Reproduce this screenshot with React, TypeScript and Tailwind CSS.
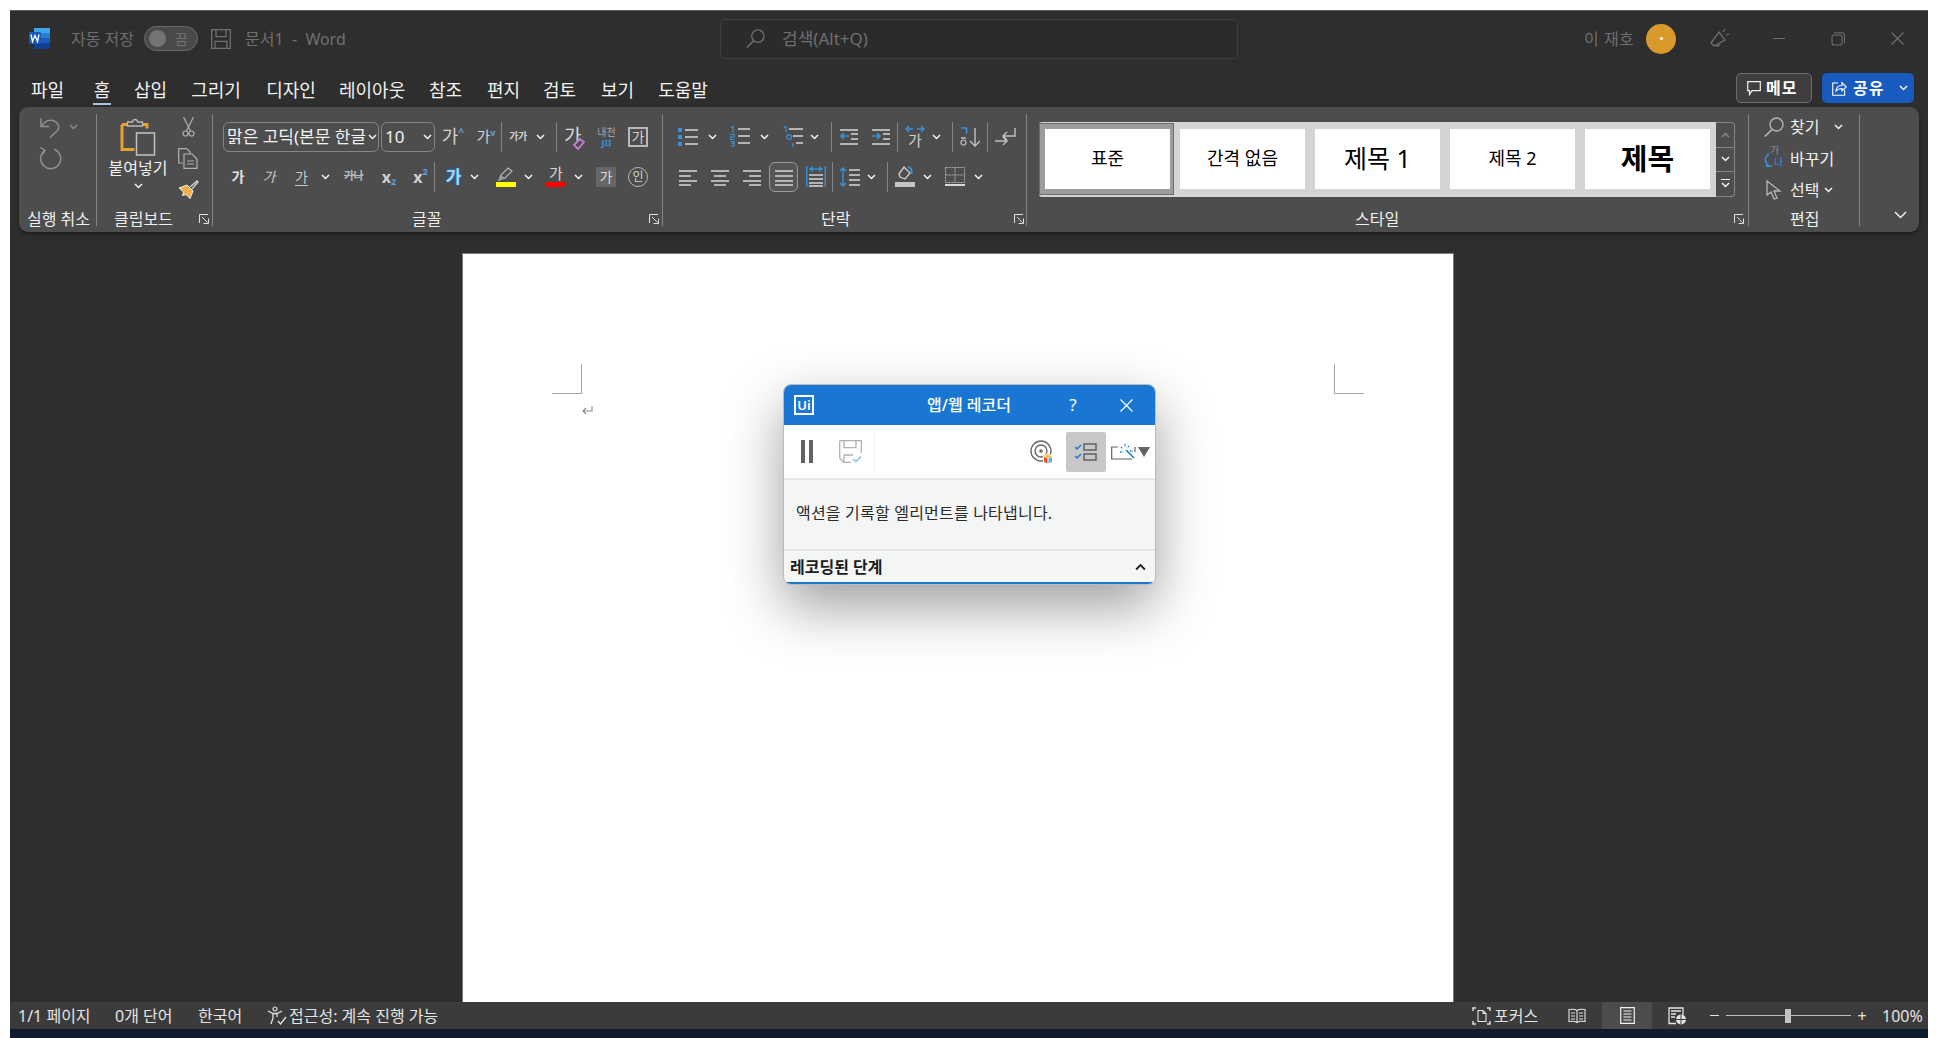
import React from 'react';

const GRAY = '#b4b4b4';
const BLUE = '#3a8fd6';

// 작은 펼침 화살표
const Chev = ({ className = '', color = '#f2f2f2' }: { className?: string; color?: string }) => (
  <svg width="9" height="6" viewBox="0 0 9 6" className={`shrink-0 ${className}`}>
    <path d="M1 1l3.5 3.5L8 1" fill="none" stroke={color} strokeWidth="1.5" />
  </svg>
);

const Sep = ({ className = '' }: { className?: string }) => (
  <div className={`h-[30px] w-px shrink-0 bg-[#858585] ${className}`} />
);

const Launcher = ({ className = '' }: { className?: string }) => (
  <svg width="10" height="10" viewBox="0 0 10 10" className={`shrink-0 ${className}`}>
    <path d="M.5 9V.5H9M3 3l5.5 5.5M9.5 4.5v5h-5" fill="none" stroke="#e0e0e0" strokeWidth="1" />
  </svg>
);

// 글자 아이콘 (가, 내천 등)
const Glyph = ({ children, className = '' }: { children: React.ReactNode; className?: string }) => (
  <span className={`flex shrink-0 items-center justify-center whitespace-nowrap ${className}`}>{children}</span>
);

const Lines = ({ rows, x1 = 0 }: { rows: [number, number, number][]; x1?: number }) => (
  <>
    {rows.map(([x, y, w], i) => (
      <rect key={i} x={x + x1} y={y} width={w} height="2" fill={GRAY} />
    ))}
  </>
);

const Icon = ({ w, h, children, className = '' }: { w: number; h: number; children: React.ReactNode; className?: string }) => (
  <svg width={w} height={h} viewBox={`0 0 ${w} ${h}`} className={`shrink-0 ${className}`}>
    {children}
  </svg>
);

const Bullets = ({ className }: { className?: string }) => (
  <Icon w={20} h={19} className={className}>
    <rect x="0" y="1" width="4" height="4" fill={BLUE} />
    <rect x="0" y="8" width="4" height="4" fill={BLUE} />
    <rect x="0" y="15" width="4" height="4" fill={BLUE} />
    <Lines rows={[[7, 2, 13], [7, 9, 13], [7, 16, 13]]} />
  </Icon>
);

const Numbered = ({ className }: { className?: string }) => (
  <Icon w={20} h={21} className={className}>
    <path d="M1 1.5l2-1v6M0 8.5h4v2.5H0.5v2.5H4.5M0.5 15.5H4v2H1.5M4 17.500v2.500H0.500" fill="none" stroke={BLUE} strokeWidth="1.200" />
    <Lines rows={[[8, 2, 12], [8, 9, 12], [8, 16, 12]]} />
  </Icon>
);

const MultiLevel = ({ className }: { className?: string }) => (
  <Icon w={20} h={21} className={className}>
    <path d="M1 1.500l2-1v6" fill="none" stroke={BLUE} strokeWidth="1.200" />
    <circle cx="6" cy="11" r="2.300" fill="none" stroke={BLUE} strokeWidth="1.300" />
    <path d="M10 17v4" stroke={BLUE} strokeWidth="1.300" />
    <Lines rows={[[6, 2, 14], [10, 9, 10], [13, 16, 7]]} />
  </Icon>
);

const Indent = ({ flip, className }: { flip?: boolean; className?: string }) => (
  <Icon w={18} h={18} className={className}>
    <Lines rows={[[0, 1, 18], [0, 15, 18]]} />
    {flip ? (
      <>
        <path d="M0 8h8M5 5l3 3-3 3" fill="none" stroke={BLUE} strokeWidth="1.600" />
        <Lines rows={[[11, 5, 7], [11, 10, 7]]} />
      </>
    ) : (
      <>
        <path d="M9 8H1M4 5L1 8l3 3" fill="none" stroke={BLUE} strokeWidth="1.600" />
        <Lines rows={[[11, 5, 7], [11, 10, 7]]} />
      </>
    )}
  </Icon>
);

const Align = ({ rows, className }: { rows: [number, number, number][]; className?: string }) => (
  <Icon w={18} h={18} className={className}>
    <Lines rows={rows} />
  </Icon>
);

const Search = ({ color, size = 20, className }: { color: string; size?: number; className?: string }) => (
  <svg width={size} height={size} viewBox="0 0 20 20" className={`shrink-0 ${className ?? ''}`}>
    <circle cx="12.500" cy="7.500" r="6.500" fill="none" stroke={color} strokeWidth="1.400" />
    <path d="M8 12.500L.8 19.500" stroke={color} strokeWidth="1.600" />
  </svg>
);

const StyleCell = ({ children, className = '' }: { children: React.ReactNode; className?: string }) => (
  <div className={`flex h-[60px] w-[125px] shrink-0 items-center justify-center whitespace-nowrap bg-white text-black ${className}`}>{children}</div>
);

const Group = ({ children, className = '' }: { children: React.ReactNode; className?: string }) => (
  <div className={`flex h-[112px] shrink-0 flex-col border-r border-[#858585] ${className}`}>{children}</div>
);

const GroupLabel = ({ children, className = '' }: { children: React.ReactNode; className?: string }) => (
  <div className={`mt-auto -mb-[2px] flex h-[17px] items-center text-[16px] leading-[17px] text-[#f0f0f0] ${className}`}>{children}</div>
);

const tabs: [string, string][] = [
  ['파일', 'ml-[21px] w-[33px]'],
  ['홈', 'ml-[29px] w-[18px]'],
  ['삽입', 'ml-[23px] w-[33px]'],
  ['그리기', 'ml-[24px] w-[50px]'],
  ['디자인', 'ml-[25px] w-[50px]'],
  ['레이아웃', 'ml-[23px] w-[66px]'],
  ['참조', 'ml-[24px] w-[33px]'],
  ['편지', 'ml-[25px] w-[33px]'],
  ['검토', 'ml-[23px] w-[33px]'],
  ['보기', 'ml-[25px] w-[33px]'],
  ['도움말', 'ml-[24px] w-[50px]'],
];

export default function App() {
  return (
    <div className="h-[1038px] w-[1938px] overflow-hidden bg-white pl-[10px] pt-[10px] font-['Noto_Sans','Noto_Sans_CJK_KR',sans-serif]">
      <div className="flex h-[1019px] w-[1918px] flex-col border-t border-[#5c5c5c] bg-[#2e2e2e]">
        {/* 제목 표시줄 */}
        <div className="flex h-[55px] shrink-0 items-center text-[16px] text-[#6f6f6f]">
          <svg width="21" height="21" viewBox="0 0 21 21" className="ml-[19px] shrink-0">
            <rect x="5" y="0" width="16" height="5" fill="#41a5ee" />
            <rect x="5" y="5" width="16" height="5" fill="#2b7cd3" />
            <rect x="5" y="10" width="16" height="5" fill="#185abd" />
            <rect x="5" y="15" width="16" height="6" fill="#103f91" />
            <rect x="0" y="4" width="12" height="12" rx="1" fill="#185abd" />
            <path d="M2 6.500l1.500 7 2.500-6 2.500 6 1.500-7" fill="none" stroke="#fff" strokeWidth="1.300" />
          </svg>
          <span className="ml-[21px] w-[65px] whitespace-nowrap">자동 저장</span>
          <div className="ml-[8px] flex h-[25px] w-[54px] items-center rounded-full border border-[#6a6a6a] bg-[#4a4a4a]">
            <div className="ml-[4px] h-[17px] w-[17px] rounded-full bg-[#747474]" />
            <span className="ml-[9px] text-[14px] text-[#737373]">끔</span>
          </div>
          <svg width="20" height="20" viewBox="0 0 20 20" className="ml-[13px] shrink-0">
            <path d="M.7.7h18.600v18.600H.7zM5 .7v7h10v-7M4 19.300v-7h12v7" fill="none" stroke="#6f6f6f" strokeWidth="1.300" />
          </svg>
          <span className="ml-[14px] w-[110px] whitespace-pre">문서1  -  Word</span>
          <div className="ml-[365px] flex h-[40px] w-[518px] shrink-0 items-center rounded-[5px] border border-[#3f3f3f] bg-[#2b2b2b]">
            <Search color="#6f6f6f" size={19} className="ml-[25px]" />
            <span className="ml-[17px] text-[17px]">검색(Alt+Q)</span>
          </div>
          <span className="ml-[346px] w-[50px] whitespace-nowrap tracking-[0.5px]">이 재호</span>
          <div className="ml-[12px] flex h-[30px] w-[30px] items-center justify-center rounded-full bg-[#d99a2b]">
            <span className="h-[3px] w-[3px] rounded-full bg-white" />
          </div>
          <svg width="20" height="21" viewBox="0 0 20 21" className="ml-[34px] shrink-0">
            <path d="M1 15L9 4l6 8-11 6zM6 17.500a2.500 2.500 0 0 0 4-1.500M13 4l2-3M16 7l3-1" fill="none" stroke="#6f6f6f" strokeWidth="1.300" />
          </svg>
          <div className="ml-[43px] h-px w-[12px] bg-[#6f6f6f]" />
          <svg width="14" height="14" viewBox="0 0 14 14" className="ml-[46px] shrink-0">
            <path d="M3 .7h8a2.500 2.500 0 0 1 2.500 2.500v8M1 5a2 2 0 0 1 2-2h6a2 2 0 0 1 2 2v6a2 2 0 0 1-2 2H3a2 2 0 0 1-2-2z" fill="none" stroke="#6f6f6f" strokeWidth="1.100" />
          </svg>
          <svg width="13" height="13" viewBox="0 0 13 13" className="ml-[46px] shrink-0">
            <path d="M.5.5l12 12M12.500.5l-12 12" stroke="#6f6f6f" strokeWidth="1.200" />
          </svg>
        </div>

        {/* 메뉴 탭 */}
        <div className="flex h-[41px] shrink-0 items-start text-[18px] leading-[24px] text-[#f2f2f2]">
          {tabs.map(([label, cls]) => (
            <div key={label} className={`relative mt-[12px] shrink-0 whitespace-nowrap text-center ${cls}`}>
              {label}
              {label === '홈' && <div className="absolute left-0 top-[25px] h-[2px] w-[18px] bg-[#a8c4e8]" />}
            </div>
          ))}
          <div className="ml-[1028px] mt-[7px] flex h-[30px] w-[76px] items-center rounded-[5px] border border-[#6e6e6e] bg-[#3f3f3f]">
            <svg width="14" height="15" viewBox="0 0 14 15" className="ml-[10px] shrink-0">
              <path d="M.7.700h12.600v9H5L2.500 13.500V9.700H.7z" fill="none" stroke="#f0f0f0" strokeWidth="1.200" />
            </svg>
            <span className="ml-[5px] text-[16px] font-bold tracking-[1px] text-white">메모</span>
          </div>
          <div className="ml-[10px] mt-[7px] flex h-[30px] w-[92px] items-center rounded-[5px] bg-[#185abd]">
            <svg width="15" height="15" viewBox="0 0 15 15" className="ml-[10px] shrink-0">
              <path d="M6 2H.7v12.300h12V9M4 10c0-4 3-5.500 6-5.500V1.500L14.300 6 10 10V7.500C7.500 7.500 5.500 8 4 10z" fill="none" stroke="#fff" strokeWidth="1.100" />
            </svg>
            <span className="ml-[6px] w-[36px] whitespace-nowrap text-[16px] font-bold tracking-[1px] text-white">공유</span>
            <Chev className="ml-[10px]" />
          </div>
        </div>

        {/* 리본 */}
        <div className="ml-[9px] flex h-[125px] w-[1900px] shrink-0 items-center rounded-[9px] bg-[#4d4d4d] text-[#e8e8e8] shadow-[0_2px_4px_rgba(0,0,0,0.4)]">
          {/* 실행 취소 */}
          <Group className="w-[78px]">
            <div className="ml-[21px] mt-[3px] flex items-center">
              <svg width="21" height="21" viewBox="0 0 21 21" className="shrink-0">
                <path d="M1 1.500v8h8M1.500 9C5 4 9 2.500 13 3.500c5 1.500 7 6 4.500 10L10 20.500" fill="none" stroke="#8f8f8f" strokeWidth="1.500" />
              </svg>
              <Chev className="ml-[8px]" color="#8a8a8a" />
            </div>
            <svg width="23" height="24" viewBox="0 0 23 24" className="ml-[20px] mt-[8px] shrink-0">
              <path d="M15 3.200a10 10 0 1 1-9 1.200M1.500 1.500L6 4.500 3 9" fill="none" stroke="#8f8f8f" strokeWidth="1.500" />
            </svg>
            <GroupLabel className="ml-[8px] whitespace-nowrap">실행 취소</GroupLabel>
          </Group>

          {/* 클립보드 */}
          <Group className="w-[116px]">
            <div className="flex">
              <div className="ml-[11px] flex w-[60px] flex-col items-center">
                <svg width="37" height="38" viewBox="0 0 36 38" className="mt-[4px] shrink-0">
                  <path d="M1.500 6.500h25v4M14 31.500H1.500v-25" fill="none" stroke="#e8a030" strokeWidth="3" />
                  <path d="M7 8V4h5a2.500 2.500 0 0 1 5 0h5v4z" fill="#4d4d4d" stroke="#b8b8b8" strokeWidth="1.300" />
                  <rect x="16" y="15" width="18" height="22" fill="#4d4d4d" stroke="#c4c4c4" strokeWidth="1.500" />
                </svg>
                <span className="mt-[2px] whitespace-nowrap text-[16px] leading-[20px] text-[#f2f2f2]">붙여넣기</span>
                <Chev className="mt-[5px]" />
              </div>
              <div className="ml-[10px] mt-[3px] flex w-[20px] flex-col items-center">
                <svg width="13" height="20" viewBox="0 0 13 20" className="shrink-0">
                  <path d="M1.500 0l7 14M11.500 0l-7 14" stroke="#b0b0b0" strokeWidth="1.200" />
                  <circle cx="3.500" cy="16.500" r="2.500" fill="none" stroke="#b0b0b0" strokeWidth="1.200" />
                  <circle cx="9.500" cy="16.500" r="2.500" fill="none" stroke="#b0b0b0" strokeWidth="1.200" />
                </svg>
                <svg width="20" height="21" viewBox="0 0 20 21" className="mt-[11px] shrink-0">
                  <path d="M5 15H.7V.7h8L12 4v2M6 6h8l5 5v9.300H6zM9 13h7M9 16h7" fill="none" stroke="#b0b0b0" strokeWidth="1.200" />
                </svg>
                <svg width="21" height="19" viewBox="0 0 21 19" className="mt-[11px] shrink-0">
                  <path d="M1 8l8-3 6 6-3 7.500-4-4-3.500 1 1-3.500z" fill="#f0b04a" stroke="#f2f2f2" strokeWidth="1" />
                  <path d="M12 7l7-6 1 1-6 7" fill="none" stroke="#d0d0d0" strokeWidth="1.400" />
                </svg>
              </div>
            </div>
            <GroupLabel>
              <span className="ml-[17px] w-[61px] whitespace-nowrap">클립보드</span>
              <Launcher className="ml-[24px]" />
            </GroupLabel>
          </Group>

          {/* 글꼴 */}
          <Group className="w-[450px]">
            <div className="mt-[8px] flex h-[30px] items-center">
              <div className="ml-[10px] flex h-[30px] w-[156px] shrink-0 items-center rounded-[6px] border border-[#858585] pl-[3px] text-[17px] text-[#f2f2f2]">
                <span className="w-[141px] overflow-hidden whitespace-nowrap">맑은 고딕(본문 한글</span>
                <Chev />
              </div>
              <div className="ml-[2px] flex h-[30px] w-[54px] shrink-0 items-center rounded-[6px] border border-[#858585] pl-[3px] text-[17px] text-[#f2f2f2]">
                <span className="w-[38px]">10</span>
                <Chev />
              </div>
              <Glyph className="ml-[6px] w-[24px] text-[18px] text-[#d0d0d0]">
                가<span className="-mt-[8px] text-[10px] font-bold text-[#5aa5e0]">^</span>
              </Glyph>
              <Glyph className="ml-[11px] w-[20px] text-[15px] text-[#d0d0d0]">
                가<span className="-mt-[7px] text-[9px] font-bold text-[#5aa5e0]">v</span>
              </Glyph>
              <Sep className="ml-[5px]" />
              <Glyph className="ml-[7px] w-[18px] text-[10px] font-bold tracking-[-0.5px] text-[#d0d0d0]">가가</Glyph>
              <Chev className="ml-[9px]" />
              <Sep className="ml-[11px]" />
              <div className="relative ml-[7px] h-[20px] w-[20px] shrink-0 text-[19px] leading-[18px] text-[#d8d8d8]">
                가
                <svg width="12" height="12" viewBox="0 0 12 12" className="absolute bottom-[-3px] right-[-1px]">
                  <path d="M1 7l6-6 4 3-6 7z" fill="#4d4d4d" stroke="#c77fd0" strokeWidth="1.800" />
                </svg>
              </div>
              <div className="ml-[12px] flex w-[21px] shrink-0 flex-col items-center">
                <span className="whitespace-nowrap text-[10px] leading-[11px] text-[#a8a8a8]">내천</span>
                <span className="text-[9px] font-bold leading-[9px] text-[#3a8fd6]">JII</span>
              </div>
              <Glyph className="ml-[11px] h-[20px] w-[20px] border-2 border-[#b8b8b8] text-[14px] text-[#d0d0d0]">가</Glyph>
            </div>
            <div className="mt-[10px] flex h-[30px] items-center">
              <Glyph className="ml-[19px] w-[12px] text-[14px] font-bold text-[#e0e0e0]">가</Glyph>
              <Glyph className="ml-[19px] w-[12px] text-[14px] italic text-[#c8c8c8]">가</Glyph>
              <Glyph className="ml-[20px] w-[13px] border-b border-[#c8c8c8] text-[14px] leading-[17px] text-[#c8c8c8]">가</Glyph>
              <Chev className="ml-[13px]" />
              <Glyph className="ml-[13px] w-[21px] text-[11px] font-bold tracking-[-0.5px] text-[#b8b8b8] line-through">가나</Glyph>
              <Glyph className="ml-[18px] w-[14px] text-[16px] font-bold text-[#d0d0d0]">
                x<span className="mt-[10px] text-[9px] text-[#5aa5e0]">2</span>
              </Glyph>
              <Glyph className="ml-[17px] w-[15px] text-[16px] font-bold text-[#d0d0d0]">
                x<span className="-mt-[10px] text-[9px] text-[#5aa5e0]">2</span>
              </Glyph>
              <Sep className="ml-[6px]" />
              <Glyph className="ml-[10px] h-[20px] w-[17px] text-[17px] font-bold leading-[18px] text-[#a9d2f3] [text-shadow:0_0_2px_#2077c4,0_0_2px_#2077c4,0_0_2px_#2077c4,0_0_1px_#2077c4]">가</Glyph>
              <Chev className="ml-[8px]" />
              <div className="ml-[17px] flex w-[20px] shrink-0 flex-col items-center">
                <svg width="18" height="14" viewBox="0 0 18 14" className="shrink-0">
                  <path d="M2 13l2-5 7-7 4 3-7 7z" fill="#4d4d4d" stroke="#b8b8b8" strokeWidth="1.200" />
                  <path d="M1 14l3-6 4 3z" fill="#9a9a9a" />
                </svg>
                <div className="mt-px h-[5px] w-[20px] bg-[#ffff00]" />
              </div>
              <Chev className="ml-[8px]" />
              <div className="ml-[13px] flex w-[20px] shrink-0 flex-col items-center">
                <span className="text-[15px] leading-[15px] text-[#d8d8d8]">가</span>
                <div className="mt-px h-[5px] w-[20px] bg-[#ff0000]" />
              </div>
              <Chev className="ml-[8px]" />
              <Glyph className="ml-[13px] h-[20px] w-[20px] bg-[#666666] text-[14px] text-[#dcdcdc]">가</Glyph>
              <Glyph className="ml-[12px] h-[20px] w-[20px] rounded-full border border-[#b8b8b8] text-[12px] text-[#d0d0d0]">인</Glyph>
            </div>
            <GroupLabel>
              <span className="ml-[199px] w-[32px] whitespace-nowrap">글꼴</span>
              <Launcher className="ml-[205px]" />
            </GroupLabel>
          </Group>

          {/* 단락 */}
          <Group className="w-[364px]">
            <div className="mt-[8px] flex h-[30px] items-center">
              <Bullets className="ml-[15px]" />
              <Chev className="ml-[10px]" />
              <Numbered className="ml-[13px]" />
              <Chev className="ml-[10px]" />
              <MultiLevel className="ml-[14px]" />
              <Chev className="ml-[7px]" />
              <Sep className="ml-[12px]" />
              <Indent className="ml-[8px]" />
              <Indent flip className="ml-[14px]" />
              <Sep className="ml-[7px]" />
              <div className="ml-[7px] flex w-[20px] shrink-0 flex-col items-center">
                <svg width="20" height="8" viewBox="0 0 20 8" className="shrink-0">
                  <path d="M8 4H1M4 1L1 4l3 3M12 4h7M16 1l3 3-3 3" fill="none" stroke={BLUE} strokeWidth="1.500" />
                </svg>
                <span className="text-[15px] leading-[15px] text-[#d0d0d0]">가</span>
              </div>
              <Chev className="ml-[7px]" />
              <Sep className="ml-[11px]" />
              <svg width="20" height="20" viewBox="0 0 20 20" className="ml-[7px] shrink-0">
                <path d="M1 1h5.500v6" fill="none" stroke={BLUE} strokeWidth="1.600" />
                <circle cx="3.500" cy="15.500" r="2.500" fill="none" stroke="#c0c0c0" strokeWidth="1.200" />
                <path d="M1 11h5M15 1v18M10 14l5 5 5-5" fill="none" stroke="#c0c0c0" strokeWidth="1.400" />
              </svg>
              <Sep className="ml-[7px]" />
              <svg width="21" height="20" viewBox="0 0 21 20" className="ml-[7px] shrink-0">
                <path d="M0 14h12M8 10l4 4-4 4" fill="none" stroke="#c0c0c0" strokeWidth="1.400" />
                <path d="M20 1v8H8M12 5L8 9l4 4" fill="none" stroke="#c0c0c0" strokeWidth="1.400" />
              </svg>
            </div>
            <div className="mt-[10px] flex h-[30px] items-center">
              <Align className="ml-[16px]" rows={[[0, 2, 18], [0, 7, 12], [0, 12, 18], [0, 16, 12]]} />
              <Align className="ml-[14px]" rows={[[0, 2, 18], [3, 7, 12], [0, 12, 18], [3, 16, 12]]} />
              <Align className="ml-[14px]" rows={[[0, 2, 18], [6, 7, 12], [0, 12, 18], [6, 16, 12]]} />
              <div className="ml-[8px] flex h-[30px] w-[29px] shrink-0 items-center justify-center rounded-[6px] border border-[#9a9a9a] bg-[#565656]">
                <Align rows={[[0, 2, 18], [0, 7, 18], [0, 12, 18], [0, 16, 18]]} />
              </div>
              <svg width="20" height="21" viewBox="0 0 20 21" className="ml-[8px] shrink-0">
                <path d="M.7 0v21M19.300 0v21M4 3h12M7 .5L4 3l3 2.500M13 .5L16 3l-3 2.500" fill="none" stroke={BLUE} strokeWidth="1.400" />
                <Lines x1={3} rows={[[0, 8, 14], [0, 12, 14], [0, 16, 14], [0, 19, 14]]} />
              </svg>
              <Sep className="ml-[6px]" />
              <svg width="20" height="20" viewBox="0 0 20 20" className="ml-[7px] shrink-0">
                <path d="M3 1v18M0 4l3-3 3 3M0 16l3 3 3-3" fill="none" stroke={BLUE} strokeWidth="1.500" />
                <Lines rows={[[9, 2, 11], [9, 7, 11], [9, 12, 11], [9, 17, 11]]} />
              </svg>
              <Chev className="ml-[7px]" />
              <Sep className="ml-[11px]" />
              <svg width="20" height="21" viewBox="0 0 20 21" className="ml-[7px] shrink-0">
                <path d="M4 8l5-7 6 6-5 6-5-2z" fill="none" stroke="#d0d0d0" strokeWidth="1.300" />
                <path d="M13 1c3 0 4 3 3.500 7" fill="none" stroke={BLUE} strokeWidth="2" />
                <rect x="0" y="16" width="20" height="5" fill="#c4c4c4" />
              </svg>
              <Chev className="ml-[8px]" />
              <svg width="20" height="19" viewBox="0 0 20 19" className="ml-[13px] shrink-0">
                <path d="M.5.500h19v15H.5zM10 .5v15M.5 8h19" fill="none" stroke="#b0b0b0" strokeWidth="1" strokeDasharray="2 1" />
                <rect x="0" y="17" width="20" height="2" fill="#d8d8d8" />
              </svg>
              <Chev className="ml-[9px]" />
            </div>
            <GroupLabel>
              <span className="ml-[158px] w-[32px] whitespace-nowrap">단락</span>
              <Launcher className="ml-[161px]" />
            </GroupLabel>
          </Group>

          {/* 스타일 */}
          <Group className="w-[722px]">
            <div className="ml-[12px] mt-[8px] flex">
              <div className="flex h-[75px] w-[677px] items-start rounded-l-[3px] bg-[#d4d4d4] pt-px">
                <div className="flex h-[72px] w-[135px] shrink-0 items-center border border-[#6e6e6e] bg-[#9c9c9c] pl-[5px]">
                  <StyleCell className="text-[18px]">표준</StyleCell>
                </div>
                <StyleCell className="ml-[6px] mt-[6px] text-[18px]">간격 없음</StyleCell>
                <StyleCell className="ml-[10px] mt-[6px] text-[25px]">제목 1</StyleCell>
                <StyleCell className="ml-[10px] mt-[6px] text-[18px]">제목 2</StyleCell>
                <StyleCell className="ml-[10px] mt-[6px] text-[29px] font-bold">제목</StyleCell>
              </div>
              <div className="flex h-[75px] w-[19px] flex-col rounded-r-[4px] border border-l-0 border-[#858585]">
                <div className="flex h-[25px] items-center justify-center border-b border-[#858585]">
                  <Chev className="rotate-180" color="#858585" />
                </div>
                <div className="flex h-[24px] items-center justify-center border-b border-[#858585]">
                  <Chev />
                </div>
                <div className="flex flex-1 flex-col items-center justify-center">
                  <div className="mb-[2px] h-px w-[9px] bg-[#f2f2f2]" />
                  <Chev />
                </div>
              </div>
            </div>
            <GroupLabel>
              <span className="ml-[328px] w-[46px] whitespace-nowrap">스타일</span>
              <Launcher className="ml-[333px]" />
            </GroupLabel>
          </Group>

          {/* 편집 */}
          <Group className="w-[111px]">
            <div className="ml-[15px] mt-[3px] flex h-[20px] items-center">
              <Search color="#b8b8b8" />
              <span className="ml-[6px] w-[32px] whitespace-nowrap text-[16px] text-[#f2f2f2]">찾기</span>
              <Chev className="ml-[12px]" />
            </div>
            <div className="ml-[15px] mt-[12px] flex h-[20px] items-center">
              <div className="relative h-[20px] w-[20px] shrink-0">
                <svg width="20" height="20" viewBox="0 0 20 20" className="shrink-0">
                  <path d="M5 5C1 7 0 12 3 15l2 2M2 12l1 5.500 5-.5" fill="none" stroke={BLUE} strokeWidth="1.600" />
                </svg>
                <span className="absolute left-[6px] top-[-4px] text-[10px] leading-[11px] text-[#8f8f8f]">가</span>
                <span className="absolute left-[10px] top-[8px] text-[10px] leading-[11px] text-[#3a8fd6]">나</span>
              </div>
              <span className="ml-[6px] whitespace-nowrap text-[16px] text-[#f2f2f2]">바꾸기</span>
            </div>
            <div className="ml-[17px] mt-[11px] flex h-[20px] items-center">
              <svg width="17" height="20" viewBox="0 0 17 20" className="shrink-0">
                <path d="M1 1v14l4-3 3 7 3-1-3-7h6z" fill="#4d4d4d" stroke="#b8b8b8" strokeWidth="1.300" />
              </svg>
              <span className="ml-[7px] w-[32px] whitespace-nowrap text-[16px] text-[#f2f2f2]">선택</span>
              <Chev className="ml-[2px]" />
            </div>
            <GroupLabel className="ml-[41px] whitespace-nowrap">편집</GroupLabel>
          </Group>

          <div className="flex h-[112px] flex-1 items-end pb-[7px] pl-[34px]">
            <svg width="13" height="8" viewBox="0 0 13 8" className="shrink-0">
              <path d="M1 1l5.500 5.500L12 1" fill="none" stroke="#f2f2f2" strokeWidth="1.500" />
            </svg>
          </div>
        </div>

        {/* 문서 영역 */}
        <div className="flex min-h-0 flex-1 pl-[452px] pt-[21px]">
          <div className="flex h-full w-[992px] flex-col border-l border-r border-t border-[#7a7a7a] bg-white">
            <div className="flex justify-between px-[89px] pt-[110px]">
              <div className="h-[30px] w-[30px] border-b border-r border-[#a6a6a6]" />
              <div className="h-[30px] w-[30px] border-b border-l border-[#a6a6a6]" />
            </div>
            <svg width="11" height="9" viewBox="0 0 11 9" className="ml-[119px] mt-[12px] shrink-0">
              <path d="M10 0v5H1M4 2L1 5l3 3" fill="none" stroke="#8a8a8a" strokeWidth="1.100" />
            </svg>
          </div>
        </div>

        {/* 상태 표시줄 */}
        <div className="flex h-[27px] shrink-0 items-center bg-[#3b3b3b] text-[16px] text-[#e4e4e4]">
          <span className="ml-[8px] w-[72px] whitespace-nowrap">1/1 페이지</span>
          <span className="ml-[25px] w-[58px] whitespace-nowrap">0개 단어</span>
          <span className="ml-[25px] w-[44px] whitespace-nowrap">한국어</span>
          <svg width="20" height="20" viewBox="0 0 20 20" className="ml-[25px] shrink-0">
            <circle cx="8" cy="3" r="2" fill="none" stroke="#e4e4e4" strokeWidth="1.200" />
            <path d="M1 5l5 2.500h4L15 5M6 8v4l-2 6M10 8v3M11 15l2.500 3L19 11" fill="none" stroke="#e4e4e4" strokeWidth="1.300" />
          </svg>
          <span className="ml-[2px] w-[153px] whitespace-nowrap">접근성: 계속 진행 가능</span>
          <svg width="19" height="18" viewBox="0 0 19 18" className="ml-[1030px] shrink-0">
            <path d="M1 4V1h3M15 1h3v3M1 14v3h3M15 17h3v-3" fill="none" stroke="#e4e4e4" strokeWidth="1.400" />
            <path d="M6 3.500h5l3 3v8H6zM11 3.500v3h3" fill="none" stroke="#e4e4e4" strokeWidth="1.100" />
          </svg>
          <span className="ml-[3px] w-[44px] whitespace-nowrap">포커스</span>
          <svg width="18" height="16" viewBox="0 0 18 16" className="ml-[30px] shrink-0">
            <path d="M9 2.500C7 1 4 1 1 1.500v12c3-.5 6-.5 8 1 2-1.500 5-1.500 8-1v-12C14 1 11 1 9 2.500zM9 2.500v12M3 5h4M3 8h4M3 11h4M11 5h4M11 8h4M11 11h4" fill="none" stroke="#e4e4e4" strokeWidth="1.100" />
          </svg>
          <div className="ml-[16px] flex h-[27px] w-[50px] shrink-0 items-center justify-center bg-[#4c4c4c]">
            <svg width="15" height="17" viewBox="0 0 15 17" className="shrink-0">
              <path d="M.7.700h13.600v15.600H.7zM3.500 4h8M3.500 7h8M3.500 10h8M3.500 13h8" fill="none" stroke="#f0f0f0" strokeWidth="1.200" />
            </svg>
          </div>
          <svg width="19" height="18" viewBox="0 0 19 18" className="ml-[16px] shrink-0">
            <path d="M8 16.500H1V1h14v7M3 4h10M3 7h5M3 10h4" fill="none" stroke="#e4e4e4" strokeWidth="1.300" />
            <circle cx="13" cy="12.500" r="5" fill="#e4e4e4" />
            <path d="M8 12.500h10M13 7.500v10" stroke="#3b3b3b" strokeWidth="1" />
          </svg>
          <div className="ml-[23px] h-px w-[9px] bg-[#e4e4e4]" />
          <div className="ml-[7px] flex h-[14px] w-[125px] items-center bg-[linear-gradient(#0000_6px,#bdbdbd_6px,#bdbdbd_7px,#0000_7px)] pl-[59px]">
            <div className="h-[14px] w-[6px] bg-[#c4c4c4]" />
          </div>
          <span className="ml-[6px] w-[10px] text-center text-[16px] leading-[14px]">+</span>
          <span className="ml-[15px] whitespace-nowrap">100%</span>
        </div>
      </div>
      <div className="h-[9px] w-[1918px] bg-[linear-gradient(90deg,#0f1b30,#121a2c_60%,#0e1e2c)]" />

      {/* 앱/웹 레코더 창 */}
      <div className="absolute left-[783px] top-[384px] flex h-[201px] w-[373px] flex-col overflow-hidden rounded-[8px] border border-[#b8bcc0] bg-[#f4f6f6] shadow-[0_22px_55px_rgba(0,0,0,0.38)]">
        <div className="flex h-[40px] shrink-0 items-center bg-[#1976d2] text-white">
          <div className="ml-[10px] flex h-[20px] w-[20px] items-center justify-center border-2 border-white text-[13px] font-semibold leading-none">
            Ui
          </div>
          <span className="ml-[112px] w-[86px] whitespace-nowrap text-center text-[16px] font-medium">앱/웹 레코더</span>
          <span className="ml-[56px] w-[10px] text-center text-[17px]">?</span>
          <svg width="13" height="13" viewBox="0 0 13 13" className="ml-[42px] shrink-0">
            <path d="M.5.500l12 12M12.500.5l-12 12" stroke="#fff" strokeWidth="1.200" />
          </svg>
        </div>
        <div className="flex h-[55px] shrink-0 items-center border-b-2 border-[#e4e6e7] bg-white">
          <div className="ml-[17px] flex gap-[4px]">
            <div className="h-[23px] w-[4px] bg-[#636363]" />
            <div className="h-[23px] w-[4px] bg-[#636363]" />
          </div>
          <svg width="23" height="23" viewBox="0 0 23 23" className="ml-[26px] shrink-0">
            <path d="M.7.700h21.600v12M5 .7v7h12v-7M.7.700V18l4 4.300h7M5 22v-7h9" fill="none" stroke="#b0b0b0" strokeWidth="1.300" />
            <path d="M14 19l3 2.500 5-5" fill="none" stroke="#8fbbe8" strokeWidth="1.500" />
          </svg>
          <div className="ml-[12px] h-[40px] w-px bg-[#f0f0f0]" />
          <svg width="23" height="24" viewBox="0 0 23 24" className="ml-[155px] shrink-0">
            <circle cx="11" cy="11" r="10" fill="none" stroke="#6a6a6a" strokeWidth="1.400" />
            <circle cx="11" cy="11" r="6" fill="none" stroke="#6a6a6a" strokeWidth="1.400" />
            <circle cx="11" cy="11" r="1.800" fill="#6a6a6a" />
            <path d="M13 16l5-3 5 3v6l-5 2-5-2z" fill="#fff" />
            <path d="M14 16.500l4-2.500 4 2.500-4 2z" fill="#f2c14e" />
            <path d="M14 17v5l3.500 1.500v-5z" fill="#e2552b" />
            <path d="M22 17v5l-3.500 1.500v-5z" fill="#58b4ea" />
          </svg>
          <div className="ml-[13px] flex h-[40px] w-[40px] shrink-0 items-center justify-center rounded-[2px] bg-[#c8c8c8]">
            <svg width="22" height="18" viewBox="0 0 22 18" className="shrink-0">
              <path d="M0 4l2 2 4-4M0 13l2 2 4-4" fill="none" stroke="#1976d2" strokeWidth="1.500" />
              <path d="M9 1h12v6H9zM9 11h12v6H9z" fill="none" stroke="#606060" strokeWidth="1.500" />
            </svg>
          </div>
          <svg width="25" height="16" viewBox="0 0 25 16" className="ml-[5px] shrink-0">
            <path d="M7 3H.7v12H21" fill="none" stroke="#606060" strokeWidth="1.200" />
            <path d="M24 3v5" stroke="#606060" strokeWidth="1.200" />
            <path d="M15 6l8 8" stroke="#1976d2" strokeWidth="1.600" />
            <path d="M14 0v3M10 3l2 2M9 8h3M18 2l-2 2M19 7h3" stroke="#1976d2" strokeWidth="1.300" strokeDasharray="1.500 1" />
          </svg>
          <svg width="12" height="10" viewBox="0 0 12 10" className="ml-[2px] shrink-0">
            <path d="M0 0h12L6 10z" fill="#636363" />
          </svg>
        </div>
        <div className="flex h-[71px] shrink-0 items-center border-b-2 border-[#e4e6e7] pb-[3px] pl-[12px] text-[16px] tracking-[0.2px] text-[#2b2b2b]">
          액션을 기록할 엘리먼트를 나타냅니다.
        </div>
        <div className="flex min-h-0 flex-1 items-center border-b-2 border-[#1976d2] pl-[6px] text-[16px] font-bold text-[#1c1c1c]">
          <span className="w-[346px] whitespace-nowrap">레코딩된 단계</span>
          <Chev className="rotate-180 scale-125" color="#222" />
        </div>
      </div>
    </div>
  );
}
